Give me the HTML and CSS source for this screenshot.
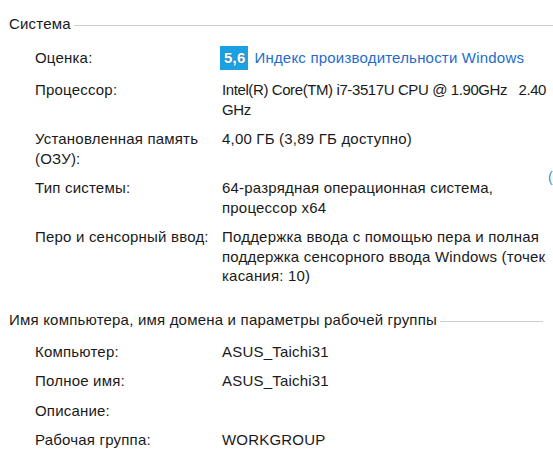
FILE: index.html
```html
<!DOCTYPE html>
<html lang="ru">
<head>
<meta charset="utf-8">
<link rel="stylesheet" href="styles.css">
</head>
<body>
<div class="page">
  <section class="group">
    <div class="group-head"><span class="group-title">Система</span><span class="rule"></span></div>
    <div class="rows">
      <div class="label">Оценка:</div>
      <div class="value rating"><span class="badge">5,6</span><a class="link">Индекс производительности Windows</a></div>
      <div class="label">Процессор:</div>
      <div class="value tight">Intel(R) Core(TM) i7-3517U CPU @ 1.90GHz&nbsp;&nbsp;&nbsp;2.40 GHz</div>
      <div class="label">Установленная память (ОЗУ):</div>
      <div class="value">4,00 ГБ (3,89 ГБ доступно)</div>
      <div class="label">Тип системы:</div>
      <div class="value">64-разрядная операционная система, процессор x64</div>
      <div class="label">Перо и сенсорный ввод:</div>
      <div class="value">Поддержка ввода с помощью пера и полная поддержка сенсорного ввода Windows (точек касания: 10)</div>
    </div>
    <span class="edge-mark">(</span>
  </section>
  <section class="group">
    <div class="group-head"><span class="group-title">Имя компьютера, имя домена и параметры рабочей группы</span><span class="rule short"></span></div>
    <div class="rows">
      <div class="label">Компьютер:</div>
      <div class="value">ASUS_Taichi31</div>
      <div class="label">Полное имя:</div>
      <div class="value">ASUS_Taichi31</div>
      <div class="label">Описание:</div>
      <div class="value"></div>
      <div class="label">Рабочая группа:</div>
      <div class="value">WORKGROUP</div>
    </div>
  </section>
</div>
</body>
</html>
```

FILE: styles.css
```css
html, body {
  margin: 0;
  padding: 0;
  background: #ffffff;
}
body {
  width: 553px;
  height: 476px;
  overflow: hidden;
  font-family: "Liberation Sans", Arial, sans-serif;
  font-size: 15px;
  letter-spacing: 0.2px;
  color: #1a1a1a;
}
.page {
  padding: 14px 0 0 9px;
}
.group {
  position: relative;
  margin-bottom: 24px;
}
.group-head {
  display: flex;
  align-items: center;
  line-height: 20px;
  margin-bottom: 12px;
}
.group-title {
  white-space: nowrap;
  padding-right: 3px;
}
.rule {
  flex: 1;
  height: 0;
  border-top: 1px solid #cfcfcf;
  margin-top: 3px;
}
.rule.short {
  margin-right: 10px;
}
.rows {
  display: grid;
  grid-template-columns: 187px 1fr;
  row-gap: 10px;
  padding-left: 26px;
  line-height: 19.5px;
}
.label {
  padding-right: 12px;
}
.value.tight {
  letter-spacing: -0.4px;
}
.rating {
  display: flex;
  align-items: center;
  height: 24px;
}
.badge {
  display: inline-block;
  background: #1ba1e2;
  color: #ffffff;
  font-weight: bold;
  height: 24px;
  line-height: 24px;
  padding: 0 3px 0 4px;
  margin-left: -2px;
  margin-right: 6px;
  text-shadow: 0 0 1px #555;
}
.link {
  color: #1e6ccc;
}
.rows .label:first-child {
  align-self: center;
}
.edge-mark {
  position: absolute;
  left: 539px;
  top: 155px;
  color: #3c8be0;
  font-size: 14px;
}
```
